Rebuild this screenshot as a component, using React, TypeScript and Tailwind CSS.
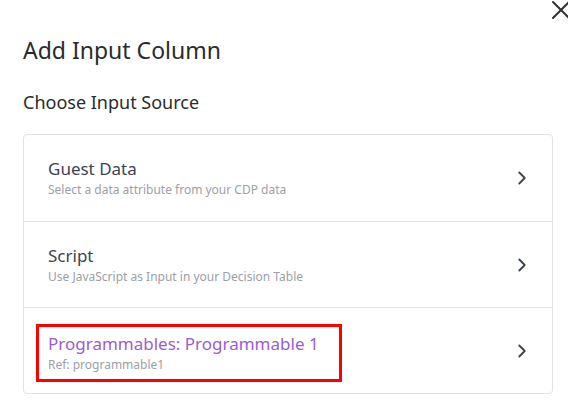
import { ChevronRight, X } from "lucide-react";

const sources = [
  { title: "Guest Data", sub: "Select a data attribute from your CDP data" },
  { title: "Script", sub: "Use JavaScript as Input in your Decision Table" },
  { title: "Programmables: Programmable 1", sub: "Ref: programmable1", picked: true },
];

export default function App() {
  return (
    <main className="relative h-[413px] w-[568px] overflow-hidden bg-white font-['Noto_Sans',sans-serif]">
      <button className="absolute right-[-9px] top-[-6px] text-[#333]">
        <X size={32} strokeWidth={1.5} />
      </button>
      <div className="px-[23px] pt-[34px]">
        <h1 className="text-[23px] leading-[32px] text-[#2b2b2b]">Add Input Column</h1>
        <h2 className="mt-[24px] text-[18px] leading-[24px] text-[#2b2b2b]">Choose Input Source</h2>
        <div className="mt-[20px] w-[530px] rounded-[4px] border border-[#e3e3e3]">
          {sources.map((s, i) => (
            <div key={s.title} className={`flex h-[86px] items-center justify-between pl-[24px] pr-[19px] ${i > 0 ? "border-t border-[#e3e3e3]" : ""}`}>
              {s.picked ? (
                <div className="-ml-[12px] mt-[5px] flex h-[58px] w-[306px] flex-col justify-center border-[3px] border-[#ff0000] pl-[9px]">
                  <p className="text-[17px] leading-[22px] text-[#9b5dd0]">{s.title}</p>
                  <p className="mt-[1px] text-[12px] leading-[17px] text-[#9ca0a6]">{s.sub}</p>
                </div>
              ) : (
                <div>
                  <p className="text-[17px] leading-[22px] text-[#3c4350]">{s.title}</p>
                  <p className="mt-[1px] text-[12px] leading-[17px] text-[#9ca0a6]">{s.sub}</p>
                </div>
              )}
              <ChevronRight size={22} strokeWidth={2} className="text-[#3c4350]" />
            </div>
          ))}
        </div>
      </div>
    </main>
  );
}
